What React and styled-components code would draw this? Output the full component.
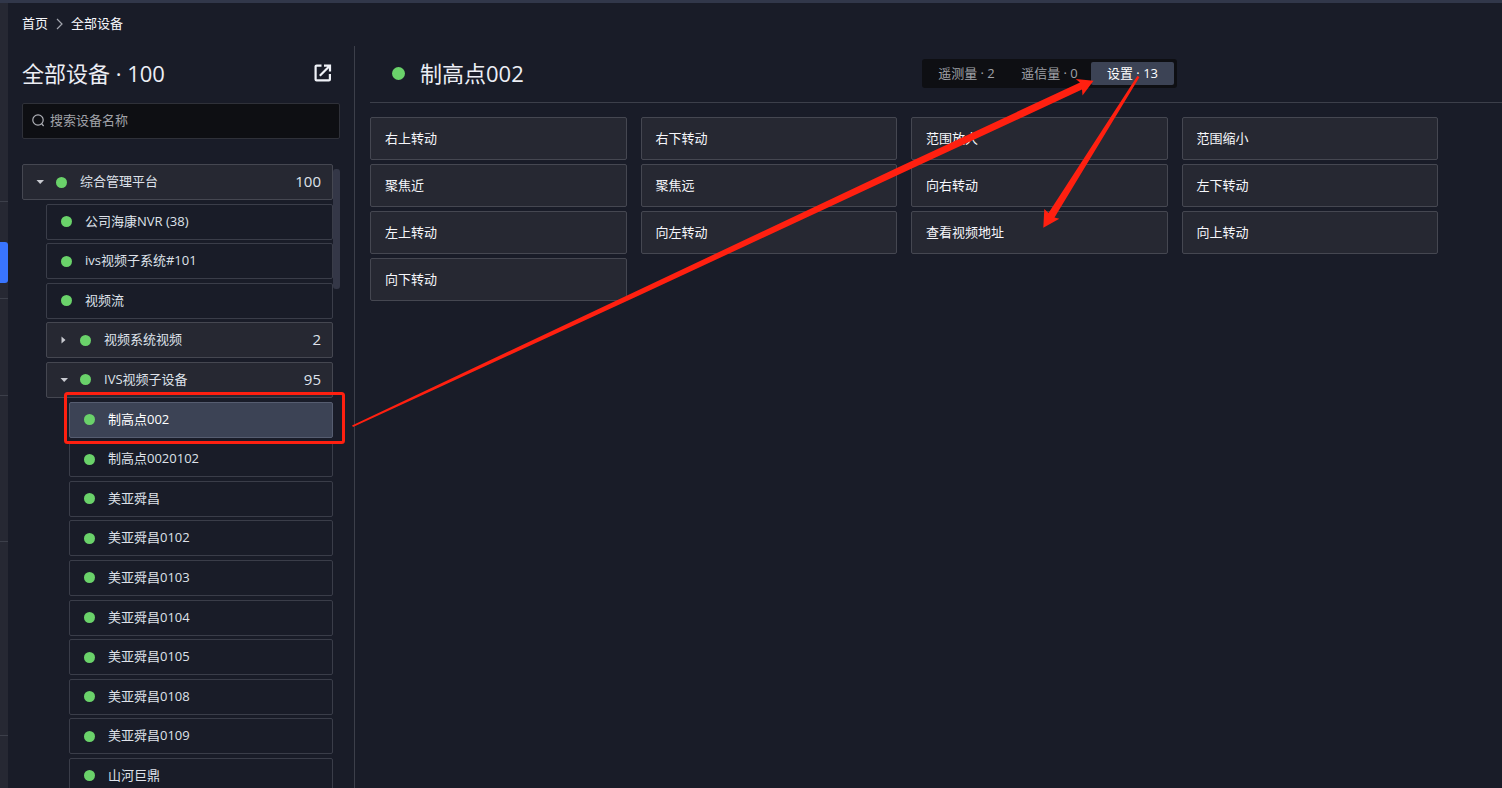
import React, { useState } from 'react';
import styled, { createGlobalStyle } from 'styled-components';

const railItems = [
  { size: 199 },
  { size: 97, active: true },
  { size: 97 },
  { size: 146 },
  { size: 194 },
];

const treeNodes = [
  { id: 1, level: 0, name: '综合管理平台', count: 100, open: true },
  { id: 2, level: 1, name: '公司海康NVR (38)' },
  { id: 3, level: 1, name: 'ivs视频子系统#101' },
  { id: 4, level: 1, name: '视频流' },
  { id: 5, level: 1, name: '视频系统视频', count: 2, open: false },
  { id: 6, level: 1, name: 'IVS视频子设备', count: 95, open: true },
  { id: 7, level: 2, name: '制高点002' },
  { id: 8, level: 2, name: '制高点0020102' },
  { id: 9, level: 2, name: '美亚舜昌' },
  { id: 10, level: 2, name: '美亚舜昌0102' },
  { id: 11, level: 2, name: '美亚舜昌0103' },
  { id: 12, level: 2, name: '美亚舜昌0104' },
  { id: 13, level: 2, name: '美亚舜昌0105' },
  { id: 14, level: 2, name: '美亚舜昌0108' },
  { id: 15, level: 2, name: '美亚舜昌0109' },
  { id: 16, level: 2, name: '山河巨鼎' },
];

const tabs = [
  { key: 'measure', label: '遥测量 · 2' },
  { key: 'signal', label: '遥信量 · 0' },
  { key: 'setting', label: '设置 · 13' },
];

const commands = [
  '右上转动', '右下转动', '范围放大', '范围缩小',
  '聚焦近', '聚焦远', '向右转动', '左下转动',
  '左上转动', '向左转动', '查看视频地址', '向上转动',
  '向下转动',
];

const indents = [0, 24, 47];

const App = () => {
  const [selected, setSelected] = useState(7);
  const [activeTab, setActiveTab] = useState('setting');
  const [keyword, setKeyword] = useState('');

  return (
    <>
      <GlobalStyle />
      <Page>
        <Body>
          <Rail>
            {railItems.map((item, i) => (
              <RailItem key={i} $size={item.size}>
                {item.active && <RailMark />}
              </RailItem>
            ))}
          </Rail>
          <Content>
            <Breadcrumb>
              <a href="#home">首页</a>
              <svg width="7" height="12" viewBox="0 0 7 12" fill="none" stroke="#a2a5ae" strokeWidth="1.2">
                <path d="M1 1l5 5-5 5" />
              </svg>
              <a href="#devices">全部设备</a>
            </Breadcrumb>
            <Columns>
              <Sidebar>
                <SidebarHead>
                  <Title>全部设备 · 100</Title>
                  <OpenButton aria-label="打开">
                    <svg width="18" height="18" viewBox="0 0 18 18" fill="none" stroke="#f0f2f8" strokeWidth="2.2">
                      <path d="M7.500 1.600H2.600a1 1 0 0 0-1 1v12.800a1 1 0 0 0 1 1h12.300a1 1 0 0 0 1-1V10" />
                      <path d="M10 1.600h6v6M15.800 1.800L5.800 11.800" />
                    </svg>
                  </OpenButton>
                </SidebarHead>
                <SearchBox>
                  <svg width="13" height="13" viewBox="0 0 13 13" fill="none" stroke="#b0b2b8" strokeWidth="1.2">
                    <circle cx="6" cy="6" r="5.2" />
                    <path d="M9.600 9.600l2 2.400" />
                  </svg>
                  <SearchInput
                    aria-label="搜索设备名称"
                    placeholder="搜索设备名称"
                    value={keyword}
                    onChange={(e) => setKeyword(e.target.value)}
                  />
                </SearchBox>
                <TreeArea>
                  <Tree>
                    {treeNodes.map((node) => (
                      <TreeRow
                        key={node.id}
                        $level={node.level}
                        $parent={node.count !== undefined}
                        $selected={selected === node.id}
                        onClick={() => setSelected(node.id)}
                      >
                        {node.count !== undefined && (
                          <Caret viewBox="0 0 8 8">
                            <path d={node.open ? 'M0.500 2h7.500L4.200 6z' : 'M1.500 0.500v7l4-3.500z'} />
                          </Caret>
                        )}
                        <Dot />
                        <NodeName>{node.name}</NodeName>
                        {node.count !== undefined && <Count>{node.count}</Count>}
                      </TreeRow>
                    ))}
                  </Tree>
                  <ScrollTrack>
                    <ScrollThumb />
                  </ScrollTrack>
                </TreeArea>
              </Sidebar>
              <Main>
                <MainHead>
                  <DeviceTitle>
                    <Dot $large />
                    <Title>制高点002</Title>
                  </DeviceTitle>
                  <Tabs>
                    {tabs.map((tab) => (
                      <Tab
                        key={tab.key}
                        $active={activeTab === tab.key}
                        onClick={() => setActiveTab(tab.key)}
                      >
                        {tab.label}
                      </Tab>
                    ))}
                  </Tabs>
                </MainHead>
                <CommandGrid>
                  {commands.map((name) => (
                    <Command key={name}>{name}</Command>
                  ))}
                </CommandGrid>
              </Main>
            </Columns>
          </Content>
        </Body>
        <Annotations width="1502" height="788" viewBox="0 0 1502 788">
          <rect x="65.5" y="393.500" width="278" height="49" rx="2" fill="none" stroke="#ff2010" strokeWidth="3" />
          <path d="M352 425.500L900 166.500L1080 82.500L1075.700 79L1093.500 80.700L1082.500 95.500L1082 89.500L900 174L640 295L353 427Z" />
          <path d="M1137.300 76L1139.500 77L1054.500 217.500L1059.300 218.700L1043.300 227.700L1044.300 209L1048.500 213Z" />
        </Annotations>
      </Page>
    </>
  );
};

const GlobalStyle = createGlobalStyle`
  * {
    box-sizing: border-box;
  }

  body {
    margin: 0;
    background: #191c28;
    color: #eceef5;
    font-family: "Open Sans", "Noto Sans CJK SC", sans-serif;
    font-size: 13px;
    line-height: 20px;
  }

  button, input {
    font: inherit;
    color: inherit;
  }

  button {
    cursor: pointer;
  }
`;

const Page = styled.div`
  position: relative;
  display: flex;
  flex-direction: column;
  height: 100vh;
  overflow: hidden;
  border-top: 3px solid #31374a;
`;

const Body = styled.div`
  display: flex;
  flex: 1;
  min-height: 0;
`;

const Rail = styled.nav`
  flex: none;
  width: 8px;
  background: #262833;
  overflow: hidden;
`;

const RailItem = styled.div`
  height: ${({ $size }) => $size}px;
  padding-top: 40px;
  border-bottom: 1px solid #3c3f4a;
`;

const RailMark = styled.div`
  height: 41px;
  background: #3975ff;
  border-radius: 0 3px 3px 0;
`;

const Content = styled.div`
  display: flex;
  flex-direction: column;
  flex: 1;
  min-width: 0;
`;

const Breadcrumb = styled.div`
  display: flex;
  align-items: center;
  flex: none;
  gap: 8px;
  height: 43px;
  padding: 0 14px 2px;

  a {
    padding-bottom: 1px;
    color: #f6f7fb;
    text-decoration: none;
  }
`;

const Columns = styled.div`
  display: flex;
  flex: 1;
  min-height: 0;
`;

const Sidebar = styled.aside`
  display: flex;
  flex-direction: column;
  flex: none;
  width: 347px;
  padding: 0 14px;
  border-right: 1px solid #3c3f4a;
`;

const SidebarHead = styled.div`
  display: flex;
  align-items: center;
  justify-content: space-between;
  flex: none;
  height: 57px;
  padding: 0 8px 3px 0;
`;

const Title = styled.h1`
  margin: 0;
  font-size: 22px;
  font-weight: 400;
  line-height: 32px;
`;

const OpenButton = styled.button`
  display: flex;
  padding: 0;
  border: none;
  background: none;
`;

const SearchBox = styled.label`
  display: flex;
  align-items: center;
  flex: none;
  gap: 5px;
  height: 36px;
  padding: 0 9px 1px;
  border: 1px solid #2f3139;
  border-radius: 2px;
  background: #0e0f13;
`;

const SearchInput = styled.input`
  flex: 1;
  min-width: 0;
  padding: 0 0 1px;
  border: none;
  outline: none;
  background: none;

  &::placeholder {
    color: #a0a2a8;
    opacity: 1;
  }
`;

const TreeArea = styled.div`
  display: flex;
  flex: 1;
  min-height: 0;
  margin-top: 25px;
  overflow: hidden;
`;

/* the last row runs slightly under the bottom edge */
const Tree = styled.div`
  display: flex;
  flex-direction: column;
  justify-content: space-between;
  flex: 1;
  height: calc(100% + 6px);
`;

const TreeRow = styled.button`
  display: flex;
  align-items: center;
  flex: none;
  gap: 13px;
  height: 36px;
  margin-left: ${({ $level }) => indents[$level]}px;
  padding: 0 11px 0 ${({ $parent }) => ($parent ? 13 : 14)}px;
  border: 1px solid ${({ $parent, $selected }) => ($selected ? '#565d70' : $parent ? '#454751' : '#3a3d49')};
  border-radius: 2px;
  background: ${({ $parent, $selected }) => ($selected ? '#3c4355' : $parent ? '#262832' : 'transparent')};
  color: ${({ $selected }) => ($selected ? '#ffffff' : '#dfe2ea')};
  text-align: left;
`;

const Caret = styled.svg`
  flex: none;
  width: 8px;
  height: 8px;
  margin-right: -1px;
  fill: #c8cad0;
`;

const Dot = styled.span`
  flex: none;
  width: ${({ $large }) => ($large ? 13 : 11)}px;
  height: ${({ $large }) => ($large ? 13 : 11)}px;
  border-radius: 50%;
  background: #6ad26a;
`;

const NodeName = styled.span`
  flex: 1;
  padding-bottom: 2px;
`;

const Count = styled.span`
  padding-bottom: 2px;
  font-size: 15px;
`;

const ScrollTrack = styled.div`
  flex: none;
  width: 7px;
  padding-top: 5px;
`;

const ScrollThumb = styled.div`
  height: 120px;
  border-radius: 3px;
  background: #343747;
`;

const Main = styled.main`
  flex: 1;
  min-width: 0;
  padding-left: 15px;
`;

const MainHead = styled.div`
  display: flex;
  align-items: center;
  justify-content: space-between;
  height: 57px;
  padding: 0 325px 2px 22px;
  border-bottom: 1px solid #3c3f4a;
`;

const DeviceTitle = styled.div`
  display: flex;
  align-items: center;
  gap: 15px;
`;

const Tabs = styled.div`
  display: flex;
  padding: 3px;
  border-radius: 3px;
  background: #0e0f13;
`;

const Tab = styled.button`
  width: 83px;
  height: 23px;
  padding: 0;
  border: none;
  border-radius: 2px;
  background: ${({ $active }) => ($active ? '#3c4355' : 'transparent')};
  color: ${({ $active }) => ($active ? '#ffffff' : '#a0a2a8')};
  line-height: 23px;
`;

const CommandGrid = styled.div`
  display: grid;
  grid-template-columns: repeat(4, 1fr);
  gap: 4px 14px;
  padding: 14px 64px 0 0;
`;

const Command = styled.button`
  height: 43px;
  padding: 0 14px 1px;
  border: 1px solid #454751;
  border-radius: 2px;
  background: #262832;
  color: #f6f7fb;
  text-align: left;
`;

const Annotations = styled.svg`
  position: absolute;
  top: -3px;
  left: 0;
  pointer-events: none;
  fill: #ff2010;
`;

export default App;
